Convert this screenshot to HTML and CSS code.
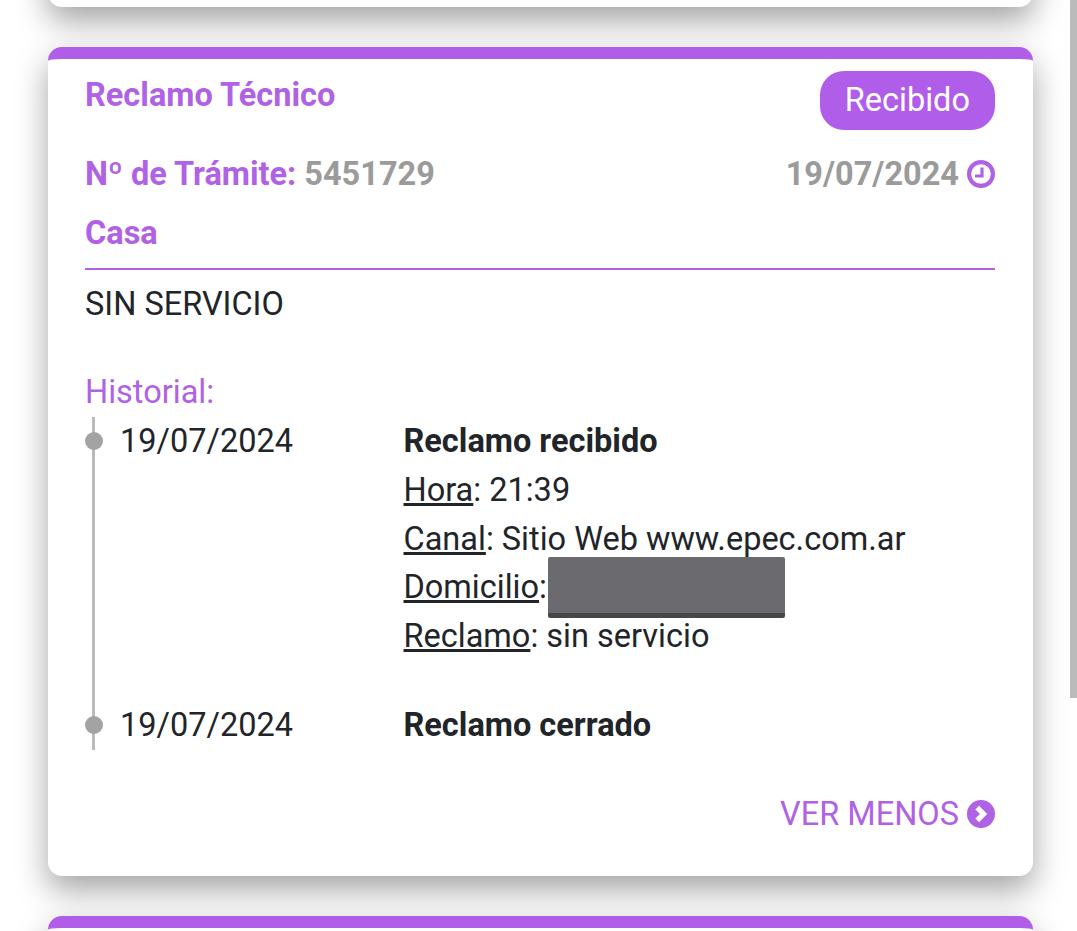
FILE: index.html
```html
<!DOCTYPE html>
<html lang="es">
<head>
    <meta charset="UTF-8">
    <meta name="viewport" content="width=device-width, initial-scale=1.0">
    <title>Mis reclamos</title>
    <link rel="stylesheet" href="styles.css">
</head>
<body>
    <div class="scrollbar"></div>

    <div class="card card-prev"></div>

    <div class="card">
        <div class="row row-title">
            <span class="title">Reclamo Técnico</span>
            <span class="badge">Recibido</span>
        </div>
        <div class="row row-info">
            <span class="title">Nº de Trámite: <span class="muted">5451729</span></span>
            <span class="date">
                <span class="muted">19/07/2024</span>
                <svg class="icon" viewBox="0 0 28 28">
                    <circle cx="14" cy="14" r="11.9" fill="none" stroke="currentColor" stroke-width="4.2"/>
                    <path d="M15 7.5v8.5H8" fill="none" stroke="currentColor" stroke-width="3.2"/>
                </svg>
            </span>
        </div>
        <div class="title place">Casa</div>
        <p class="description">SIN SERVICIO</p>

        <div class="history-label">Historial:</div>
        <div class="timeline">
            <div class="event">
                <span class="dot"></span>
                <div class="event-date">19/07/2024</div>
                <div>
                    <div class="event-title">Reclamo recibido</div>
                    <div><u>Hora</u>: 21:39</div>
                    <div><u>Canal</u>: Sitio Web www.epec.com.ar</div>
                    <div class="address"><u>Domicilio</u>:<span class="redacted"></span></div>
                    <div><u>Reclamo</u>: sin servicio</div>
                </div>
            </div>
            <div class="event">
                <span class="dot"></span>
                <div class="event-date">19/07/2024</div>
                <div class="event-title">Reclamo cerrado</div>
            </div>
        </div>

        <div class="more">
            VER MENOS
            <svg class="icon" viewBox="0 0 28 28">
                <circle cx="14" cy="14" r="14" fill="currentColor"/>
                <path d="M10.2 7.6l6.4 6.4-6.4 6.4" fill="none" stroke="#fff" stroke-width="5.2"/>
            </svg>
        </div>
    </div>

    <div class="card"></div>
</body>
</html>
```

FILE: styles.css
```css
html, body {
    height: 931px;
    overflow: hidden;
}

body {
    font-family: Roboto, sans-serif;
    font-size: 32.5px;
    line-height: 48.6px;
    color: #212529;
    margin: 0;
    background-color: #fff;
}

.scrollbar {
    position: absolute;
    top: 0;
    right: 0;
    width: 7px;
    height: 698px;
    background-color: #bbb;
}

.card {
    margin: 0 44px 40px 48px;
    padding: 12px 38px 37px 37px;
    background-color: #fff;
    border-top: 12px solid #b05ee9;
    border-radius: 14px;
    box-shadow: 0 14px 32px rgba(0, 0, 0, 0.36);
}

/* only its bottom edge is in view */
.card-prev {
    height: 107px;
    margin-top: -100px;
    padding: 0;
    border-top: none;
}

.row {
    display: flex;
    justify-content: space-between;
}

.row-title {
    height: 59px;
}

.row-info {
    margin-top: 20px;
}

.title {
    font-weight: 700;
    color: #b062e4;
}

.muted {
    color: #9b9b9b;
    font-weight: 700;
}

.badge {
    padding: 5px 25px;
    color: #fff;
    background-color: #b05ee9;
    border-radius: 24px;
}

.date,
.more {
    display: flex;
    align-items: center;
    gap: 8px;
    color: #b062e4;
}

.icon {
    flex-shrink: 0;
    width: 28px;
    height: 28px;
}

.place {
    margin-top: 10px;
    padding-bottom: 11px;
    border-bottom: 2px solid #b062e4;
}

.description {
    margin: 10px 0 39px;
}

.history-label {
    color: #b062e4;
}

.timeline {
    margin-top: 1px;
    margin-left: 7px;
    border-left: 3px solid #bbb;
}

.event {
    position: relative;
    display: grid;
    grid-template-columns: 283.5px 1fr;
    padding-left: 25px;
    margin-bottom: 41px;
}

.event:last-child {
    margin-bottom: 0;
}

.dot {
    position: absolute;
    top: 15px;
    left: -10px;
    width: 18px;
    height: 18px;
    border-radius: 50%;
    background-color: #a3a3a3;
}

.event-title {
    font-weight: 700;
}

.address {
    display: flex;
    align-items: center;
    height: 48.6px;
}

.redacted {
    flex-shrink: 0;
    width: 237px;
    height: 61px;
    margin-left: 1.5px;
    background: linear-gradient(#6b6b6f 91%, #47474b 91%);
    border-radius: 2px;
}

.more {
    justify-content: flex-end;
    margin-top: 40px;
}
```
